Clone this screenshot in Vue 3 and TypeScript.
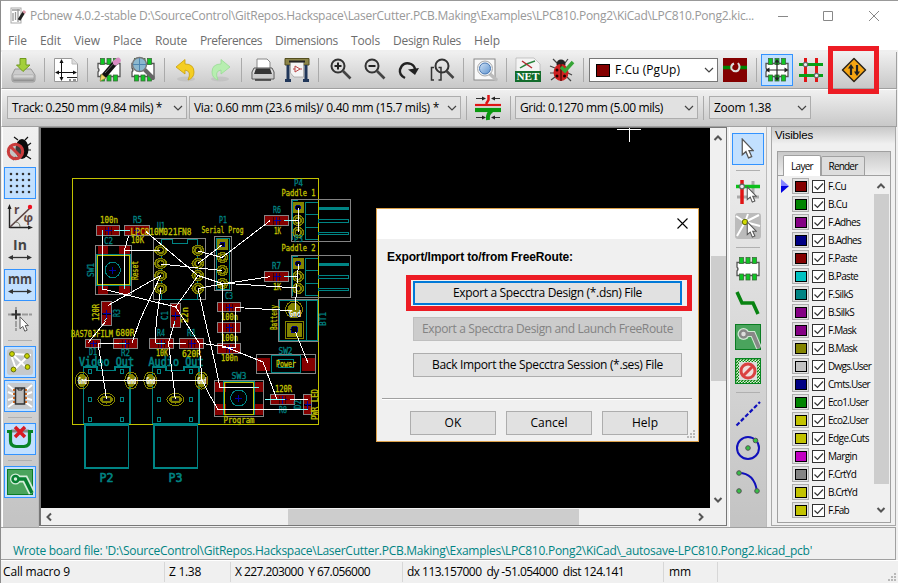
<script setup lang="ts">
import type { Directive } from 'vue'

interface Fitted { t: string; w: number }
interface Layer extends Fitted { c: string }
interface PcbText { t: string; x: number; y: number; w: number; h?: number; v?: boolean; k: string }

/* Spreads a label over its design width by adjusting the tracking. */
const vFit: Directive<HTMLElement, number> = {
  mounted(el, binding) {
    const n = (el.textContent ?? '').length
    const natural = el.getBoundingClientRect().width
    el.style.letterSpacing = `${(binding.value + 1 - natural) / n}px`
  },
}

const menus: Fitted[] = [
  { t: 'File', w: 18 }, { t: 'Edit', w: 20 }, { t: 'View', w: 25 }, { t: 'Place', w: 28 },
  { t: 'Route', w: 31 }, { t: 'Preferences', w: 61 }, { t: 'Dimensions', w: 62 },
  { t: 'Tools', w: 28 }, { t: 'Design Rules', w: 67 }, { t: 'Help', w: 25 },
]

const layers: Layer[] = [
  { t: 'F.Cu', w: 17, c: '#840000' }, { t: 'B.Cu', w: 18, c: '#008400' },
  { t: 'F.Adhes', w: 31, c: '#840084' }, { t: 'B.Adhes', w: 32, c: '#000084' },
  { t: 'F.Paste', w: 28, c: '#840000' }, { t: 'B.Paste', w: 29, c: '#00c2c2' },
  { t: 'F.SilkS', w: 24, c: '#008484' }, { t: 'B.SilkS', w: 25, c: '#840084' },
  { t: 'F.Mask', w: 27, c: '#840084' }, { t: 'B.Mask', w: 28, c: '#848400' },
  { t: 'Dwgs.User', w: 42, c: '#c2c2c2' }, { t: 'Cmts.User', w: 41, c: '#000084' },
  { t: 'Eco1.User', w: 39, c: '#008400' }, { t: 'Eco2.User', w: 39, c: '#c2c200' },
  { t: 'Edge.Cuts', w: 40, c: '#c2c200' }, { t: 'Margin', w: 28, c: '#c200c2' },
  { t: 'F.CrtYd', w: 27, c: '#848484' }, { t: 'B.CrtYd', w: 28, c: '#c2c200' },
  { t: 'F.Fab', w: 20, c: '#c2c200' },
]

const position = 'X 227.203000\u00a0 Y 67.056000'
const delta = 'dx 113.157000\u00a0 dy -51.054000\u00a0 dist 124.141'

/* Horizontal and vertical two-pad parts: x, y, width, height */
const chips: number[][] = [
  [96.5, 225.5, 23, 10], [124.5, 225.5, 25, 10], [264.5, 215.5, 24, 10], [264.5, 271.5, 24, 10],
  [217.5, 302.5, 23, 9], [217.5, 322.5, 23, 10], [217.5, 343.5, 23, 10], [85.5, 339.5, 15, 8],
  [113.5, 338.5, 24, 10], [149.5, 338.5, 24, 10], [179.5, 338.5, 24, 10], [270.5, 394.5, 24, 10],
]
const tallChips: number[][] = [[101.5, 301.5, 10, 24], [170.5, 303.5, 10, 24], [303.5, 394.5, 8, 20]]
const icPads: number[][] = [
  [160.7, 250.3], [160.7, 263.5], [160.7, 275.5], [160.7, 288.5],
  [198, 250.3], [198, 263.5], [198, 275.5], [198, 288.5],
]
const roundPads: number[][] = [
  [222.5, 257.5], [222.5, 270.5], [222.5, 283.5],
  [298.3, 220.5], [298.3, 232.5], [298.3, 276.5], [298.3, 288.5],
]
const sidePads: number[] = [82, 131.3, 150.3, 201.5]

const ratsnest: string[] = [
  '102.5,230 102.5,289 175.7,307', '128.5,236 124.5,250 124.5,289', '124.5,250.5 160,250.5',
  '160.7,275.5 108.3,305.3', '146,231.7 198,275.7', '160.7,264 222,270.5', '160.7,275.5 140,320 132,343',
  '160.7,288.5 156.5,320 155,343', '198,288 205,320 215,363 220,387.5 259,387.5',
  '198,275.7 175.7,307 199,343', '106,321 88,343', '175,321 168.5,343 175.3,399', '98,343 106.5,399',
  '98,343.5 119,343.5', '169,343.5 186,343.5', '199,343 209,344.5 223,346 263,362 277,399.5',
  '82,380.5 202,380.5', '199,343 202,380 209,394 218,409.5 308,409.5', '222.5,283 222.5,348',
  '235.5,348 235.5,307.5 291.7,310.7', '270,220.7 222,257.5', '270,276.7 222,284 198,288.5',
  '220,283 297,288', '198,251 222,257.5', '198,263.5 222.5,244.5', '198,275.5 222,283.5',
  '298.5,208 298.5,232', '298.5,264 295,310', '295.5,332 308,363', '290,399.5 308,399.5', '284,220.5 298,220.5',
  '284,276.5 298,276.5', '222,347 235,348', '114,230.5 130,230.5',
]

const pcbTexts: PcbText[] = [
  { t: '100n', x: 100, y: 223, w: 18, k: 'y' }, { t: 'R5', x: 133, y: 223, w: 9, k: 't' },
  { t: 'U1', x: 157, y: 229, w: 8, k: 't' }, { t: 'LPC810M021FN8', x: 130.5, y: 235, w: 61, k: 'y' },
  { t: 'C2', x: 104, y: 244, w: 9, k: 't' }, { t: '10K', x: 131, y: 243, w: 13, k: 'y' },
  { t: 'SW1', x: 94, y: 277, w: 14, v: true, k: 't' }, { t: 'Reset', x: 138, y: 280, w: 19, v: true, k: 'y' },
  { t: '120R', x: 99, y: 321, w: 17, v: true, k: 'y' }, { t: 'R3', x: 120, y: 317, w: 8, v: true, k: 't' },
  { t: 'C1', x: 168, y: 320, w: 9, v: true, k: 't' }, { t: '22n', x: 188, y: 323, w: 16, v: true, k: 'y' },
  { t: 'P4', x: 294, y: 186, w: 9, k: 't' }, { t: 'Paddle 1', x: 281.5, y: 196, w: 34, k: 'y' },
  { t: 'R6', x: 273, y: 213, w: 8, k: 't' }, { t: '1K', x: 274, y: 234, w: 7, k: 'y' },
  { t: 'P3', x: 294, y: 242, w: 9, k: 't' }, { t: 'Paddle 2', x: 281.5, y: 251, w: 34, k: 'y' },
  { t: 'R7', x: 272, y: 269, w: 9, k: 't' }, { t: '1K', x: 273, y: 290, w: 8, k: 'y' },
  { t: 'P1', x: 219, y: 223, w: 8, k: 't' }, { t: 'Serial Prog', x: 201.5, y: 233, w: 42, k: 'y' },
  { t: 'C3', x: 225, y: 299, w: 8, k: 't' }, { t: '100n', x: 221, y: 320, w: 17, k: 'y' },
  { t: '100n', x: 221, y: 341, w: 17, k: 'y' }, { t: '100n', x: 221, y: 361, w: 17, k: 'y' },
  { t: 'Battery', x: 277, y: 330, w: 25, v: true, k: 'y' }, { t: 'BT1', x: 326, y: 326, w: 14, v: true, k: 't' },
  { t: 'SW2', x: 278.5, y: 354, w: 14, k: 't' }, { t: 'Power', x: 276, y: 367, w: 20, k: 'y' },
  { t: 'SW3', x: 231.5, y: 379, w: 15, k: 't' }, { t: 'Program', x: 223.5, y: 423, w: 31, k: 'y' },
  { t: '120R', x: 275, y: 392, w: 17, k: 'y' }, { t: 'R8', x: 279, y: 413, w: 8, k: 't' },
  { t: 'D2', x: 301, y: 409, w: 9, v: true, k: 't' }, { t: 'PWR LED', x: 318, y: 420, w: 31, v: true, k: 'y' },
  { t: 'BAS70JFILM', x: 71, y: 337, w: 42, k: 'y' }, { t: '680R', x: 115.5, y: 336, w: 19, k: 'y' },
  { t: 'D1', x: 89, y: 355, w: 8, k: 't' }, { t: 'R2', x: 121, y: 356, w: 9, k: 't' },
  { t: 'R4', x: 157, y: 336, w: 8, k: 't' }, { t: 'R1', x: 187, y: 336, w: 9, k: 't' },
  { t: '10K', x: 156, y: 356, w: 12, k: 'y' }, { t: '620R', x: 182, y: 357, w: 19, k: 'y' },
  { t: 'Video Out', x: 79, y: 366, w: 55, h: 12, k: 'big' }, { t: 'Audio Out', x: 148.5, y: 366, w: 55, h: 12, k: 'big' },
  { t: 'P2', x: 99.5, y: 482, w: 14, h: 12.5, k: 'big' }, { t: 'P3', x: 168.5, y: 482, w: 14, h: 12.5, k: 'big' },
  { t: 'Gnd', x: 289, y: 317, w: 12, h: 8, k: 'w' },
]
</script>

<template>
  <div class="window">
    <svg class="defs" width="0" height="0">
      <defs>
        <linearGradient id="steel" x1="0" y1="0" x2="0" y2="1"><stop offset="0" stop-color="#eee" /><stop offset="1" stop-color="#888" /></linearGradient>
        <linearGradient id="lens" x1="0" y1="0" x2="1" y2="1"><stop offset="0" stop-color="#cfe2f5" /><stop offset="1" stop-color="#5f93cf" /></linearGradient>
        <pattern id="hatch" width="3" height="3" patternUnits="userSpaceOnUse"><rect width="3" height="3" fill="#d8f0d8" /><path d="M0 3L3 0" stroke="#0a840f" stroke-width="1.3" /></pattern>
        <symbol id="cursor" viewBox="0 0 12 20"><path d="M1 1V16L4.500 13L7 19L10 17.700L7.400 12H11.500Z" fill="#fff" stroke="#555" stroke-width="1.2" /></symbol>
        <symbol id="chip" viewBox="0 0 26 26">
          <path d="M2 6.500H24V19.500H2V15Q4 13 2 11Z" fill="#fff" stroke="#555" stroke-width="1.3" />
          <g fill="#0fc624" stroke="#3c6b3c" stroke-width=".8"><rect x="4.500" y="1.500" width="4" height="6" /><rect x="11" y="1.500" width="4" height="6" /><rect x="17.500" y="1.500" width="4" height="6" /><rect x="4.500" y="18" width="4" height="6" /><rect x="11" y="18" width="4" height="6" /><rect x="17.500" y="18" width="4" height="6" /></g>
        </symbol>
        <symbol id="chev" viewBox="0 0 10 10"><path d="M1 3L5 7L9 3" fill="none" stroke="#444" stroke-width="1.2" /></symbol>
        <symbol id="sb" viewBox="0 0 10 10"><path d="M1.500 7L5 3.500L8.500 7" fill="none" stroke="#555" stroke-width="2" /></symbol>
      </defs>
    </svg>

    <header class="titlebar">
      <svg class="appicon" width="16" height="18" viewBox="0 0 16 18"><rect x="1" y="1" width="10" height="15" fill="#fff" stroke="#aaa" /><path d="M2 3H10M3 6V14M5.500 5V13M8 2V15" stroke="#999" stroke-width="1.3" /><path d="M14 5L9 13" stroke="#222" stroke-width="3" /><path d="M15 4L13.500 6" stroke="#d9a" stroke-width="3" /></svg>
      <span v-fit="723" class="title">Pcbnew 4.0.2-stable D:\SourceControl\GitRepos.Hackspace\LaserCutter.PCB.Making\Examples\LPC810.Pong2\KiCad\LPC810.Pong2.kic...</span>
      <svg class="winbtns" width="110" height="12" viewBox="0 0 110 12"><path d="M5 6.500H15M50.500 1.500H59.500V10.500H50.500ZM96 1L106 11M106 1L96 11" fill="none" stroke="#888" /></svg>
    </header>

    <nav class="menubar">
      <span v-for="m in menus" :key="m.t" class="menu"><span v-fit="m.w" class="fit">{{ m.t }}</span></span>
    </nav>

    <div class="toolbar main">
      <div class="slot"><svg width="26" height="26" viewBox="0 0 26 26"><path d="M5 12L2 18V23Q2 25 4 25H23Q25 25 25 23V18L21 12Z" fill="#ccc" stroke="#999" /><rect x="3" y="18" width="21" height="6" rx="1" fill="url(#steel)" stroke="#999" stroke-width=".6" /><path d="M10 1.500H16V8H20L13 14.500L6.500 8H10Z" fill="#a3cf3a" stroke="#719b1e" /></svg></div>
      <i class="sep"></i>
      <div class="slot"><svg width="26" height="26" viewBox="0 0 26 26"><path d="M1.500 1.500H19L24.500 7V24.500H1.500Z" fill="#fff" stroke="#999" /><path d="M19 1.500V7H24.500" fill="#ddd" stroke="#bbb" /><path d="M8.500 3V23M3 15.500H23" stroke="#111" /><path d="M8.500 2L6.500 6H10.500ZM8.500 24L6.500 20H10.500ZM2 15.500L6 13.500V17.500ZM24 15.500L20 13.500V17.500Z" fill="#111" /><path d="M14 20.500H24M16 23H18M20 23H23" stroke="#222" /></svg></div>
      <i class="sep"></i>
      <div class="slot"><svg width="26" height="26" viewBox="0 0 26 26"><use href="#chip" /><path d="M7 20L19 6" stroke="#111" stroke-width="5.500" /><path d="M9 16L18 6" stroke="#666" stroke-width="1" /><path d="M19.500 5.500L22 3.500" stroke="#d98cc4" stroke-width="5.500" stroke-linecap="round" /><path d="M4 24L5.500 17L10 21Z" fill="#f1d66b" stroke="#a68b3b" stroke-width=".6" /></svg></div>
      <div class="slot"><svg width="26" height="26" viewBox="0 0 26 26"><use href="#chip" /><path d="M15 13L23 21" stroke="#666" stroke-width="4" stroke-linecap="round" /><circle cx="9.500" cy="7.500" r="7" fill="#8bb8cf" stroke="#777" stroke-width="1.400" /><path d="M9.500 1V14M3 7.500H16" stroke="#4e86b0" /></svg></div>
      <i class="sep"></i>
      <div class="slot"><svg width="26" height="26" viewBox="0 0 26 26"><ellipse cx="13" cy="22" rx="9" ry="2.500" fill="#0001" /><path d="M3 10L12 2.500V7Q21 7 21 15Q21 21 15 23Q19 14 12 13V17Z" fill="#f5ce22" stroke="#c9a007" stroke-width=".8" /></svg></div>
      <div class="slot"><svg width="26" height="26" viewBox="0 0 26 26"><ellipse cx="13" cy="22" rx="9" ry="2.500" fill="#0001" /><path d="M23 10L14 2.500V7Q5 7 5 15Q5 21 11 23Q7 14 14 13V17Z" fill="#b7eeb0" stroke="#98dc94" stroke-width=".8" /></svg></div>
      <i class="sep"></i>
      <div class="slot"><svg width="26" height="26" viewBox="0 0 26 26"><path d="M7 13V2H17L20 5V13Z" fill="#fff" stroke="#888" /><path d="M4 11H22L24 15V22H2V15Z" fill="#ddd" stroke="#555" /><path d="M6 11.500H20L22 17H4Z" fill="#343434" /><rect x="3" y="17" width="20" height="4" fill="#ccc" /><path d="M5 23H21" stroke="#333" stroke-width="1.500" /></svg></div>
      <div class="slot"><svg width="26" height="26" viewBox="0 0 26 26"><path d="M1 1.500H25V8H1Z" fill="#8b8449" stroke="#544f20" /><path d="M4 8V22M22 8V22M1 23.500H7M19 23.500H25" stroke="#21375a" stroke-width="3" /><path d="M6.500 5H19.500V20H10L6.500 16Z" fill="#f4f4f4" stroke="#999" stroke-width=".7" /><path d="M9 12H11M11 9V15L16 12ZM16 12H18" stroke="#b44" fill="none" /><path d="M5 4.500H21" stroke="#222" stroke-width="2" /></svg></div>
      <i class="sep"></i>
      <div class="slot"><svg width="26" height="26" viewBox="-1 0 26 26"><circle cx="10" cy="9" r="6.500" class="mg" /><path d="M15 14L22.500 21.500" class="mh" /><path d="M6.500 9H13.500M10 5.500V12.500" class="mp" /></svg></div>
      <div class="slot"><svg width="26" height="26" viewBox="-1 0 26 26"><circle cx="10" cy="9" r="6.500" class="mg" /><path d="M15 14L22.500 21.500" class="mh" /><path d="M6.500 9H13.500" class="mp" /></svg></div>
      <div class="slot"><svg width="26" height="26" viewBox="-1 -1 26 26"><path d="M9 20Q3 17 4 11.500Q7 3 15 6Q19 8 19 12" fill="none" stroke="#222" stroke-width="2.400" /><path d="M12 11.500L23 10L19 17Z" fill="#222" /></svg></div>
      <div class="slot"><svg width="26" height="26" viewBox="1 0 26 26"><circle cx="14" cy="9" r="6.500" fill="none" stroke="#333" stroke-width="2" /><path d="M18.500 14L25.500 21" stroke="#444" stroke-width="2.500" /><path d="M6 10.500H3.500V23H6M10.500 10.500H13V23H10.500" fill="none" stroke="#333" stroke-width="1.500" /></svg></div>
      <i class="sep"></i>
      <div class="slot"><svg width="26" height="26" viewBox="0 0 26 26"><rect x="2" y="2" width="21" height="21" fill="#f8f8f8" stroke="#888" /><path d="M18 17L24 22.500" stroke="#bbb" stroke-width="3.500" stroke-linecap="round" /><circle cx="13" cy="11.500" r="7.500" fill="#e9eef3" stroke="#aaa" /><circle cx="13" cy="11.500" r="5.500" fill="url(#lens)" stroke="#4978b4" /></svg></div>
      <i class="sep"></i>
      <div class="slot"><svg width="26" height="26" viewBox="0 0 26 26"><path d="M1 1H19L25 7V24H1Z" fill="#f4f4f4" stroke="#aaa" stroke-width=".6" /><path d="M5 11Q12 6 20 4" stroke="#27833b" fill="none" stroke-width="1.500" /><path d="M7 4L17 11" stroke="#b32b30" stroke-width="1.500" /><rect y="14" width="26" height="11" fill="#136c2c" /><text x="1.500" y="23" textLength="23" lengthAdjust="spacingAndGlyphs" class="net">NET</text></svg></div>
      <div class="slot"><svg width="26" height="26" viewBox="0 0 26 26"><path d="M8 6L4 2M16 6L19 2M6 11L1 9M5 16L1 16M6 20L2 23M19 16L23 18M18 20L22 24" stroke="#444" stroke-width="1.200" /><circle cx="12" cy="7" r="4.500" fill="#222" /><ellipse cx="12" cy="15.500" rx="7.500" ry="8.500" fill="#cf1f1f" /><path d="M12 7V24" stroke="#300" /><g fill="#200"><circle cx="8" cy="13" r="1.500" /><circle cx="8" cy="19" r="1.500" /><circle cx="15.500" cy="19" r="1.500" /></g><path d="M12 10L16 14L24 5" fill="none" stroke="#36a536" stroke-width="3.500" /></svg></div>
      <i class="sep"></i>
      <div class="combo layerbox"><i class="chipcolor"></i><span v-fit="64" class="fit">F.Cu (PgUp)</span><svg class="chev" width="10" height="10"><use href="#chev" /></svg></div>
      <div class="slot"><svg width="24" height="24" viewBox="0 0 24 24"><rect width="24" height="24" fill="#840000" /><path d="M0 9.500H8M16 9.500H24" stroke="#008400" stroke-width="3.500" /><path d="M11 5.500Q7.500 7 8.500 11Q11 14.500 15 12.500Q18 9 15 5" fill="none" stroke="#ddd" stroke-width="2" /></svg></div>
      <i class="sep"></i>
      <div class="slot"><div class="on"><svg width="26" height="26" viewBox="0 0 26 26"><use href="#chip" /><path d="M13 3V23M3 13H23" stroke="#222" stroke-width="1.200" /><path d="M13 2L10.500 5.500H15.500ZM13 24L10.500 20.500H15.500ZM1.500 13L5.500 10.500V15.500ZM24.500 13L20.500 10.500V15.500Z" fill="#222" /></svg></div></div>
      <div class="slot"><svg width="26" height="26" viewBox="0 0 26 26"><path d="M7.500 1V25M18.500 1V25" stroke="#e01515" stroke-width="3" /><path d="M1 7.500H25M1 18.500H25" stroke="#08a018" stroke-width="3" /><circle cx="7.500" cy="7.500" r="2.200" class="via" /><circle cx="18.500" cy="18.500" r="2.200" class="via" /></svg></div>
      <div class="slot marked"><svg width="26" height="26" viewBox="0 0 26 26"><path d="M13 1.500L24.500 13L13 24.500L1.500 13Z" fill="#f6a512" stroke="#2c2418" stroke-width="1.500" stroke-linejoin="round" /><path d="M10 9V18M16 8V17" stroke="#222" stroke-width="2.200" /><path d="M10 7L7 11.500H13ZM16 19L13 14.500H19Z" fill="#222" /></svg></div>
    </div>

    <div class="toolbar aux">
      <div class="combo track"><span v-fit="149" class="fit">Track: 0.250 mm (9.84 mils) *</span><svg class="chev" width="10" height="10"><use href="#chev" /></svg></div>
      <div class="combo viabox"><span v-fit="244" class="fit">Via: 0.60 mm (23.6 mils)/ 0.40 mm (15.7 mils) *</span><svg class="chev" width="10" height="10"><use href="#chev" /></svg></div>
      <i class="sep"></i>
      <div class="slot"><svg width="26" height="26" viewBox="0 0 26 26"><path d="M0 10H26" stroke="#e01515" stroke-width="2.200" /><path d="M13.500 0V5L11 9" fill="none" stroke="#e01515" stroke-width="2.500" /><path d="M0 15H26" stroke="#0a980f" stroke-width="4.200" /><path d="M17 16Q12 18 13 25" fill="none" stroke="#0a980f" stroke-width="4" /><path d="M1 3.500H8M18 3.500H25M1 22.500H8M18 22.500H25" stroke="#333" /><path d="M11 3.500L7 1.500V5.500ZM16 3.500L20 1.500V5.500ZM11 22.500L7 20.500V24.500ZM16 22.500L20 20.500V24.500Z" fill="#222" /></svg></div>
      <i class="sep"></i>
      <div class="combo gridbox"><span v-fit="142" class="fit">Grid: 0.1270 mm (5.00 mils)</span><svg class="chev" width="10" height="10"><use href="#chev" /></svg></div>
      <i class="sep"></i>
      <div class="combo zoombox"><span v-fit="56" class="fit">Zoom 1.38</span><svg class="chev" width="10" height="10"><use href="#chev" /></svg></div>
    </div>

    <div class="middle">
      <aside class="side left">
        <div class="slot"><svg width="26" height="26" viewBox="1 0 26 26"><path d="M12 4L8 1M19 4L22 1M21 10L25 7M21 14H25M19 19L25 23M10 21L7 24" stroke="#111" stroke-width="1.200" /><ellipse cx="16" cy="13" rx="6.500" ry="10" fill="#0b0b0b" /><circle cx="9.500" cy="15.500" r="7.200" fill="#8886" stroke="#c93b3b" stroke-width="3" /><path d="M4.500 10.500L14.500 20.500" stroke="#c93b3b" stroke-width="3" /></svg></div>
        <div class="slot"><div class="on"><svg width="26" height="26" viewBox="0 0 26 26"><path d="M4 4H23M4 10H23M4 16H23M4 22H23" stroke="#333" stroke-width="2.600" stroke-dasharray="0 6" stroke-linecap="round" /></svg></div></div>
        <div class="slot"><svg width="26" height="26" viewBox="0 0 26 26"><path d="M2.500 24V3M2.500 23.500H23" stroke="#222" stroke-width="1.400" /><path d="M2.500 0L.5 5H4.500ZM26 23.500L21 21.500V25.500Z" fill="#222" /><path d="M3 23L23 4" stroke="#5b4444" stroke-width="1.700" /><path d="M8 18Q13 18 13 23" fill="none" stroke="#776" /><circle cx="23" cy="3" r="2.200" fill="#f01020" /><text x="7" y="9.500" class="polar">r</text><text x="16.500" y="18" class="polar">φ</text></svg></div>
        <div class="slot"><svg width="26" height="26" viewBox="0 0 26 26"><text x="6" y="12" textLength="14" class="unit">In</text><path d="M3 19.500H23" stroke="#333" stroke-width="1.300" /><path d="M1 19.500L6 17V22ZM25 19.500L20 17V22Z" fill="#333" /></svg></div>
        <div class="slot"><div class="on"><svg width="26" height="26" viewBox="0 0 26 26"><text x="1" y="12" textLength="24" lengthAdjust="spacingAndGlyphs" class="unit">mm</text><path d="M3 19.500H23" stroke="#333" stroke-width="1.300" /><path d="M1 19.500L6 17V22ZM25 19.500L20 17V22Z" fill="#333" /></svg></div></div>
        <div class="slot"><svg width="26" height="26" viewBox="0 0 26 26"><path d="M9 1V25M1 8.500H25" stroke="#999" stroke-width="1.800" stroke-dasharray="6 1" /><path d="M9 4V13M4.500 8.500H13.500" stroke="#333" stroke-width="2" /><use href="#cursor" x="12" y="10" width="10" height="16" /></svg></div>
        <i class="sep"></i>
        <div class="slot"><div class="on"><svg width="26" height="26" viewBox="0 0 26 26"><rect width="26" height="26" rx="3" fill="#c6c9cc" /><path d="M5 5L21 20M7 21L20 8M7 5L24 6M4 6L9 20" stroke="#fff" stroke-width="2" /><g fill="#cbd600" stroke="#68700c"><circle cx="5" cy="5" r="2.400" /><circle cx="20" cy="7" r="2.400" /><circle cx="6.500" cy="20.500" r="2.400" /><circle cx="20.500" cy="18" r="2.400" /></g></svg></div></div>
        <div class="slot"><div class="on"><svg width="26" height="26" viewBox="0 0 26 26"><rect width="26" height="26" rx="3" fill="#c6c9cc" /><path d="M1 2L8 8M1 9L8 12M1 17L8 15M1 24L8 19M25 2L18 8M25 9L18 12M25 17L18 15M25 24L18 19" stroke="#fff" stroke-width="2" /><path d="M6 7H8M6 11H8M6 15H8M6 19H8M18 7H20M18 11H20M18 15H20M18 19H20" stroke="#d36b22" stroke-width="2" /><path d="M8.500 5H17.500V21H8.500Z" fill="#bbb" stroke="#333" stroke-width="1.500" /><path d="M11 5V7H15V5" fill="none" stroke="#222" /></svg></div></div>
        <i class="sep"></i>
        <div class="slot"><div class="on"><svg width="26" height="26" viewBox="0 0 26 26"><path d="M4 5H22" stroke="#888" stroke-width="3" /><path d="M0 5.500H3.500V15Q3.500 20 9 20.500H17Q22.500 20 22.500 15V5.500H26" fill="none" stroke="#078324" stroke-width="3.200" /><path d="M8 1L18 11M18 1L8 11" stroke="#d81b22" stroke-width="3.500" /></svg></div></div>
        <i class="sep"></i>
        <div class="slot"><div class="on"><svg width="26" height="26" viewBox="0 0 26 26"><rect x=".5" y=".5" width="25" height="25" fill="#4aa45d" stroke="#0a7c22" /><path d="M8.500 10H18L25 24" fill="none" stroke="#d4edda" stroke-width="7" /><circle cx="8.500" cy="10" r="5.500" fill="#d4edda" /><path d="M9 10H18L25 24" fill="none" stroke="#078032" stroke-width="3.500" /><circle cx="8.500" cy="10" r="3" fill="#d4edda" stroke="#078032" stroke-width="2.500" /></svg></div></div>
      </aside>

      <main class="frame">
        <div class="canvasrow">
          <svg class="pcb" width="669" height="380" viewBox="41 128 669 380" shape-rendering="crispEdges">
            <path d="M617 129.500H641M629.500 128V142" stroke="#fff" fill="none" />
            <rect x="72.500" y="178.500" width="246" height="246" class="ol y" />

            <!-- Phono sockets -->
            <g v-for="dx in [0, 69]" :key="dx" :transform="`translate(${dx} 0)`">
              <path d="M83.500 367H97V370.500H115V367H130V423.500H83.500Z" class="ol t thick" />
              <rect x="85" y="425" width="43.500" height="43" class="ol t thick" />
              <g v-for="sy in [369, 397.500, 417]" :key="sy"><rect x="88.500" :y="sy" width="3" height="4" class="ol t" /><rect x="120.500" :y="sy" width="3" height="4" class="ol t" /></g>
              <ellipse cx="106.500" cy="399.500" rx="8.500" ry="6" class="ol o" />
              <ellipse cx="106.500" cy="399.500" rx="6.500" ry="4" fill="#848400" />
              <ellipse cx="106.500" cy="399.500" rx="3.500" ry="2" fill="#111" />
            </g>
            <g v-for="px in sidePads" :key="px">
              <ellipse :cx="px" cy="380.500" rx="6.500" ry="8.500" class="ol o" />
              <ellipse :cx="px" cy="380.500" rx="4.500" ry="7" fill="#848400" />
              <text :x="px - 4" y="384" textLength="9" lengthAdjust="spacingAndGlyphs" font-size="8" class="pt w">Gnd</text>
            </g>

            <!-- Tactile switch SW1 -->
            <path d="M98 245H108V256H98ZM119 245H130V256H119ZM98 284H108V295H98ZM119 284H130V295H119Z" class="cu" />
            <rect x="95.500" y="245.500" width="36" height="49" class="ol g" /><rect x="96.500" y="254.500" width="34" height="31" class="ol t" /><rect x="97.500" y="255.500" width="32" height="29" class="ol y" />
            <circle cx="112.700" cy="270" r="7.700" class="ol t" /><path d="M109 270.500H116M112.500 267V274" class="ol b" />

            <!-- Tactile switch SW3 -->
            <path d="M215 382H226V392H215ZM253 382H264V392H253ZM215 404H226V415H215ZM253 404H264V415H253Z" class="cu" />
            <rect x="214.500" y="380.500" width="49" height="36" class="ol g" /><rect x="223.500" y="381.500" width="31" height="33" class="ol t" /><rect x="224.500" y="382.500" width="29" height="32" class="ol y" />
            <circle cx="238.700" cy="398" r="8" class="ol t" /><path d="M235 398.500H242M238.500 395V402" class="ol b" />

            <!-- Microcontroller -->
            <rect x="153.500" y="238.500" width="52" height="61" class="ol g" /><path d="M161.500 239.500H172V243H187V239.500H197.500V299.500H161.500Z" class="ol t" />
            <g v-for="(p, i) in icPads" :key="`u${i}`"><ellipse :cx="p[0]" :cy="p[1]" rx="6.500" ry="5.500" fill="#848400" /><circle :cx="p[0]" :cy="p[1]" r="4.200" fill="none" stroke="#333300" /><circle :cx="p[0]" :cy="p[1]" r="2.200" fill="#000" /></g>

            <!-- Serial header -->
            <rect x="214.500" y="236.500" width="17" height="54" class="ol g" /><rect x="216.500" y="238.500" width="13" height="51" class="ol t" /><rect x="217" y="239" width="11" height="11" fill="#848400" /><circle cx="222.500" cy="244.500" r="2.500" fill="#000" stroke="#000084" />

            <!-- Paddle connectors -->
            <g v-for="dy in [0, 56]" :key="dy" :transform="`translate(0 ${dy})`">
              <rect x="291.500" y="199.500" width="59" height="42" class="ol g" />
              <path d="M292.500 200.500H298M292.500 200V240M305.500 202.500H318M305.500 214.500H318M305.500 227.500H318M305.500 239.500H318M305.500 202V240" class="ol t" />
              <rect x="319" y="207" width="30" height="3" fill="#008484" /><rect x="318.500" y="219.500" width="30" height="3" class="ol t" /><rect x="318.500" y="232.500" width="30" height="2" class="ol t" />
              <rect x="293" y="202" width="11" height="11" fill="#848400" /><circle cx="298" cy="207.500" r="2.500" fill="#000" stroke="#000084" />
            </g>

            <!-- Battery terminals -->
            <path d="M318.500 299.500H278.500V341.500H318.500" class="ol g" /><path d="M317.500 300.500H279.500V340.500H317.500ZM306.500 300V340" class="ol t" />
            <circle cx="294" cy="309.500" r="8.500" class="ol o" /><circle cx="294" cy="309.500" r="6.500" fill="#848400" />
            <rect x="285.500" y="321.500" width="18" height="17" class="ol o" /><rect x="287" y="323" width="15" height="14" fill="#848400" /><circle cx="294.500" cy="329.500" r="3.500" fill="#000" stroke="#000084" />

            <!-- Power switch -->
            <path d="M257 358H270V371H257ZM302 358H315V371H302Z" class="cu" /><rect x="256.500" y="354.500" width="59" height="19" class="ol g" /><rect x="271.500" y="355.500" width="29" height="17" class="ol t" /><rect x="278.500" y="359.500" width="15" height="8" class="ol t" />

            <g v-for="(c, i) in chips" :key="`c${i}`">
              <rect :x="c[0] + .5" :y="c[1] + .5" :width="c[2] - 1" :height="c[3] - 1" class="cu" />
              <path :d="`M${c[0] + c[2] / 2 - 3} ${c[1] + 1}v${c[3] - 2}m6 0v${2 - c[3]}`" stroke="#3c0000" />
              <path :d="`M${c[0] + c[2] / 2} ${c[1] + 1}v${c[3] - 2}m-3 ${1 - c[3] / 2}h7`" class="ol b" />
              <rect :x="c[0]" :y="c[1]" :width="c[2]" :height="c[3]" class="ol g" />
            </g>
            <g v-for="(c, i) in tallChips" :key="`t${i}`">
              <rect :x="c[0] + .5" :y="c[1] + .5" :width="c[2] - 1" :height="c[3] * .45" class="cu" /><rect :x="c[0] + .5" :y="c[1] + c[3] * .55" :width="c[2] - 1" :height="c[3] * .45" class="cu" />
              <path :d="`M${c[0] + 1} ${c[1] + c[3] / 2}h${c[2] - 2}m${1 - c[2] / 2} -4v8`" class="ol b" />
              <rect :x="c[0]" :y="c[1]" :width="c[2]" :height="c[3]" class="ol g" />
            </g>

            <g v-for="(p, i) in roundPads" :key="`p${i}`"><circle :cx="p[0]" :cy="p[1]" r="5.800" fill="#848400" /><circle :cx="p[0]" :cy="p[1]" r="4" fill="none" stroke="#333300" /><circle :cx="p[0]" :cy="p[1]" r="2.200" fill="#000" /></g>

            <text v-for="(s, i) in pcbTexts" :key="`s${i}`" :transform="`translate(${s.x} ${s.y})${s.v ? ' rotate(-90)' : ''}`" :textLength="s.w" lengthAdjust="spacingAndGlyphs" :font-size="s.h ?? 8.5" :class="['pt', s.k]">{{ s.t }}</text>

            <polyline v-for="(r, i) in ratsnest" :key="`r${i}`" :points="r" fill="none" stroke="#fff" />
            <path d="M114 230.500H130M284 220.500H291M284 276.500H291M265 399.500H285M156 343.500H165M119 343.500H126M175 321L174 325M104 321L107 318M102.500 230V236M102.500 285V289M124.500 285V289M259 387.500H253M300 409.500H308" stroke="#84ffff" fill="none" />
          </svg>
          <div class="vscroll"><svg width="10" height="10"><use href="#sb" /></svg><i class="vthumb"></i><svg class="down" width="10" height="10"><use href="#sb" /></svg></div>
        </div>
        <div class="hscroll"><svg class="lft" width="10" height="10"><use href="#sb" /></svg><i class="hthumb"></i><svg class="rgt" width="10" height="10"><use href="#sb" /></svg></div>
      </main>

      <aside class="side right">
        <div class="slot"><div class="on"><svg width="26" height="26"><use href="#cursor" x="6" y="2" width="13" height="21" /></svg></div></div>
        <i class="sep"></i>
        <div class="slot"><svg width="26" height="26" viewBox="0 0 26 26"><path d="M18 2V23M2 18H24" stroke="#aaa" stroke-width="3" /><path d="M7 1V25" stroke="#e01515" stroke-width="3.500" /><path d="M1 7.500H25" stroke="#0cc01c" stroke-width="3.500" /><circle cx="7" cy="7.500" r="2.400" class="via" /><use href="#cursor" x="11" y="7" width="11" height="17" /></svg></div>
        <div class="slot"><svg width="26" height="26" viewBox="0 0 26 26"><rect width="26" height="26" rx="3" fill="#bbb" /><path d="M10 9L1 3M10 9L13 1M10 9L24 2M10 9L25 13M10 9L2 23" stroke="#fff" stroke-width="2" /><circle cx="10" cy="9" r="2.700" fill="#d2dc00" stroke="#667008" /><use href="#cursor" x="11" y="8" width="11" height="17" /></svg></div>
        <i class="sep"></i>
        <div class="slot"><svg width="26" height="26"><use href="#chip" width="26" height="26" /></svg></div>
        <div class="slot"><svg width="26" height="26" viewBox="0 0 26 26"><path d="M2 2L7 13H18L23 24" fill="none" stroke="#088311" stroke-width="3.500" /></svg></div>
        <div class="slot"><svg width="26" height="26" viewBox="0 0 26 26"><rect x=".5" y=".5" width="25" height="25" fill="#4aa45d" stroke="#0a7c22" /><path d="M9 10H18L24 24" fill="none" stroke="#cfe8d4" stroke-width="6" /><circle cx="8.500" cy="10" r="6" fill="#cfe8d4" /><path d="M9 10H18L24 24" fill="none" stroke="#888" stroke-width="4" /><circle cx="8.500" cy="10" r="3.500" fill="#ddd" stroke="#888" stroke-width="2.500" /></svg></div>
        <div class="slot"><svg width="26" height="26" viewBox="0 0 26 26"><rect x=".5" y=".5" width="25" height="25" fill="url(#hatch)" stroke="#078520" /><rect x="4" y="4" width="18" height="18" fill="#ddd" /><circle cx="13" cy="13" r="7" fill="#f1dddd" stroke="#da4242" stroke-width="3" /><path d="M8.500 17.500L17.500 8.500" stroke="#da4242" stroke-width="3" /></svg></div>
        <i class="sep"></i>
        <div class="slot"><svg width="26" height="26" viewBox="0 0 26 26"><path d="M1.500 24.500L25 1" stroke="#1010bb" stroke-width="2.200" stroke-dasharray="4.200 2" /></svg></div>
        <div class="slot"><svg width="26" height="26" viewBox="0 0 26 26"><circle cx="13" cy="13" r="11" fill="none" stroke="#1010bb" stroke-width="2" /><circle cx="13" cy="13" r="2.300" class="node" /><circle cx="20.500" cy="5.500" r="2.300" class="node" /></svg></div>
        <div class="slot"><svg width="26" height="26" viewBox="0 0 26 26"><path d="M4 4Q19 4 22 22" fill="none" stroke="#1010bb" stroke-width="2" /><circle cx="4" cy="4" r="2.300" class="node" /><circle cx="4" cy="22" r="2.300" class="node" /><circle cx="22" cy="22" r="2.300" class="node" /></svg></div>
      </aside>

      <aside class="visibles">
        <div class="vhead"><span v-fit="37" class="fit">Visibles</span></div>
        <div class="notebook">
          <div class="tabs"><div class="tab active"><span v-fit="21" class="fit">Layer</span></div><div class="tab"><span v-fit="28" class="fit">Render</span></div></div>
          <div class="listwrap">
            <div class="layers">
              <div v-for="(l, i) in layers" :key="l.t" class="layer">
                <svg class="mark" width="8" height="14" viewBox="0 0 8 14"><g v-if="i === 0"><path d="M0 0L8 7H0Z" fill="#8484ff" /><path d="M0 14L8 7H0Z" fill="#0000e0" /></g></svg>
                <span class="swatch"><i :style="{ background: l.c }"></i></span>
                <svg class="check" width="13" height="13" viewBox="0 0 13 13"><rect x=".5" y=".5" width="12" height="12" fill="#fff" stroke="#333" /><path d="M2.500 6.500L5.500 9.500L11 3.500" fill="none" stroke="#333" stroke-width="1.200" /></svg>
                <span v-fit="l.w" class="fit">{{ l.t }}</span>
              </div>
            </div>
            <div class="lscroll"><svg width="10" height="10"><use href="#sb" /></svg><i class="lthumb"></i><svg class="down" width="10" height="10"><use href="#sb" /></svg></div>
          </div>
        </div>
      </aside>
    </div>

    <div class="message"><span v-fit="798" class="fit">Wrote board file: 'D:\SourceControl\GitRepos.Hackspace\LaserCutter.PCB.Making\Examples\LPC810.Pong2\KiCad\_autosave-LPC810.Pong2.kicad_pcb'</span></div>

    <footer class="status">
      <div class="cell c1"><span v-fit="66" class="fit">Call macro 9</span></div>
      <div class="cell c2"><span v-fit="31" class="fit">Z 1.38</span></div>
      <div class="cell c3"><span v-fit="134" class="fit">{{ position }}</span></div>
      <div class="cell c4"><span v-fit="216" class="fit">{{ delta }}</span></div>
      <div class="cell c5"><span v-fit="21" class="fit">mm</span></div>
      <svg class="grip" width="9" height="9" viewBox="0 0 9 9"><path d="M6 0h2v2h-2zM3 3h2v2h-2zM6 3h2v2h-2zM0 6h2v2h-2zM3 6h2v2h-2zM6 6h2v2h-2z" fill="#b8b8b8" /></svg>
    </footer>

    <section class="dialog">
      <div class="dtitle"><svg width="11" height="11" viewBox="0 0 11 11"><path d="M.5.5L10.500 10.500M10.500.5L.5 10.500" stroke="#000" stroke-width="1.100" /></svg></div>
      <div class="dbody">
        <h1><span v-fit="185" class="fit">Export/Import to/from FreeRoute:</span></h1>
        <div class="actions">
          <button class="focus"><span v-fit="188" class="fit">Export a Specctra Design (*.dsn) File</span></button>
          <button disabled><span v-fit="250" class="fit">Export a Specctra Design and Launch FreeRoute</span></button>
          <button><span v-fit="230" class="fit">Back Import the Specctra Session (*.ses) File</span></button>
        </div>
        <div class="rule"></div>
        <div class="confirm">
          <button><span v-fit="16" class="fit">OK</span></button>
          <button><span v-fit="36" class="fit">Cancel</span></button>
          <button><span v-fit="25" class="fit">Help</span></button>
        </div>
      </div>
      <svg class="dgrip" width="9" height="9" viewBox="0 0 9 9"><path d="M6 0h2v2h-2zM3 3h2v2h-2zM6 3h2v2h-2zM0 6h2v2h-2zM3 6h2v2h-2zM6 6h2v2h-2z" fill="#b8b8b8" /></svg>
      <div class="highlight"></div>
    </section>
  </div>
</template>

<style>
body { margin: 0; overflow: hidden; }
</style>

<style scoped>
* { box-sizing: border-box; }
.window { position: relative; width: 898px; height: 583px; display: flex; flex-direction: column; background: #f0f0f0; border-left: 1px solid #8c8c8c; border-top: 1px solid #999; color: #000; font: 12px/16px "Open Sans", "Noto Sans", sans-serif; overflow: hidden; }
.defs { position: absolute; }
.fit, .title { display: inline-block; white-space: pre; flex: none; }
svg { display: block; flex: none; overflow: visible; }

.titlebar { height: 30px; flex: none; background: #fff; display: flex; align-items: center; padding-left: 9px; color: #999; }
.appicon { margin-right: 4px; }
.title { margin-top: -1px; }
.winbtns { margin-left: 19px; }
.menubar { height: 21px; flex: none; background: #fff; border-bottom: 2px solid #efefef; display: flex; align-items: center; gap: 13px; padding-left: 7px; color: #6d6d6d; }
.menu { display: flex; }

.toolbar { flex: none; display: flex; align-items: center; background: linear-gradient(#f0f0f0, #c8c8c8); border-right: 1px solid #a0a0a0; border-left: 1px solid #fff; margin-right: 1px; }
.toolbar.main { height: 37px; padding-left: 4px; border-bottom: 1px solid #a0a0a0; }
.toolbar.aux { height: 38px; border-top: 1px solid #fff; border-bottom: 1px solid #a0a0a0; padding: 0 0 1px 5px; }
.slot { width: 34px; height: 34px; flex: none; display: flex; align-items: center; justify-content: center; }
.on { width: 32px; height: 32px; display: flex; align-items: center; justify-content: center; background: #c2e0ff; border: 1px solid #3393ff; }
.toolbar .sep { width: 9px; height: 24px; flex: none; background: linear-gradient(#aaa, #aaa) center / 1px 100% no-repeat; }
.toolbar.main .sep:nth-last-of-type(1) { width: 8px; }
.combo { height: 23px; flex: none; display: flex; align-items: center; background: #e1e1e1; border: 1px solid #adadad; padding: 0 3px 0 4px; }
.combo .chev { margin-left: auto; }
.layerbox { width: 129px; height: 24px; background: #fff; border-color: #777; margin-left: 1px; padding-left: 6px; }
.chipcolor { width: 14px; height: 13px; background: #840000; border: 1px solid #000; margin-right: 5px; flex: none; }
.marked { width: 51px; height: 48px; border: 5px solid #ed1c24; position: relative; z-index: 1; }
.track { width: 180px; }
.viabox { width: 272px; margin-left: 2px; }
.toolbar.aux > .sep { margin-left: 1px; }
.gridbox { width: 183px; }
.zoombox { width: 102px; margin-left: 1px; }

.mg { fill: #ddd; stroke: #333; stroke-width: 2; }
.mh { stroke: #444; stroke-width: 2.6; }
.mp { stroke: #222; stroke-width: 2; }
.via { fill: #eee; stroke: #666; stroke-width: 1.2; }
.node { fill: #36bf46; stroke: #555; }
.net { font: bold 11px "Liberation Serif", serif; fill: #fff; }
.polar { font: bold 12px "Open Sans", sans-serif; fill: #5a4545; }
.unit { font: bold 14px "Open Sans", sans-serif; fill: #444; }

.middle { height: 400px; flex: none; display: flex; }
.side { flex: none; display: flex; flex-direction: column; align-items: center; padding-top: 5px; background: linear-gradient(#f0f0f0, #c3c3c3); border-left: 1px solid #fff; border-right: 1px solid #bbb; }
.side .sep { width: 24px; height: 9px; flex: none; background: linear-gradient(#b0b0b0, #b0b0b0) center / 100% 1px no-repeat; }
.left { width: 37px; margin-left: 1px; padding-right: 1px; }
.right { width: 38px; margin-left: 2px; padding-right: 1px; }
.frame { width: 688px; height: 399px; border: 1px solid #777; border-width: 1px 1px 1px 2px; background: #f0f0f0; flex: none; }
.canvasrow { display: flex; height: 380px; }
.pcb { background: #000; overflow: hidden; }
.vscroll { width: 16px; display: flex; flex-direction: column; align-items: center; padding: 5px 0 3px; }
.vthumb { width: 15px; height: 125px; margin-top: 113px; background: #cdcdcd; }
.down { margin-top: auto; transform: rotate(180deg); }
.hscroll { height: 17px; display: flex; align-items: center; padding-left: 3px; }
.hthumb { width: 291px; height: 16px; margin-left: 234px; background: #cdcdcd; }
.lft { transform: rotate(-90deg); }
.rgt { transform: rotate(90deg); margin-left: 117px; }

.ol { fill: none; stroke-width: 1; }
.thick { stroke-width: 1.6; }
.ol.y { stroke: #c2c200; }
.ol.t { stroke: #008484; }
.ol.g { stroke: #848484; }
.ol.o { stroke: #848400; }
.ol.b { stroke: #0000a4; }
.cu { fill: #840000; }
.pt { font-family: "DejaVu Sans Mono", monospace; stroke-width: .3px; }
.pt.y { fill: #c2c200; stroke: #c2c200; }
.pt.t { fill: #008484; stroke: #008484; }
.pt.big { fill: #008484; stroke: #008484; stroke-width: .6px; }
.pt.w { fill: #fff; font-weight: bold; }

.visibles { width: 125px; margin-left: 4px; border: 1px solid #a8a8a8; border-top: 0; background: #f0f0f0; flex: none; height: 399px; }
.vhead { height: 17px; background: linear-gradient(#c8c8c8, #f0f0f0); padding-left: 3px; font: 11.5px/17px "Liberation Sans", sans-serif; }
.notebook { width: 114px; height: 372px; margin: 7px 0 0 5px; border: 1px solid #a0a0a0; display: flex; flex-direction: column; font-size: 10px; }
.tabs { height: 24px; flex: none; display: flex; align-items: flex-end; padding-left: 5px; background: linear-gradient(#c9c9c9, #ededed); border-bottom: 1px solid #a0a0a0; }
.tab { height: 19px; width: 44px; border: 1px solid #a0a0a0; border-bottom: 0; border-radius: 2px 2px 0 0; display: flex; justify-content: center; align-items: center; background: #ddd; }
.tab.active { width: 38px; height: 21px; background: #fff; margin-bottom: -1px; }
.listwrap { flex: 1; display: flex; min-height: 0; }
.layers { flex: 1; padding: 1px 0 0 3px; }
.layer { height: 18px; display: flex; align-items: center; }
.mark { margin-right: 3px; }
.swatch { width: 17px; height: 16px; border: 1px solid #adadad; background: #e1e1e1; display: flex; align-items: center; justify-content: center; margin-right: 3px; }
.swatch i { width: 12px; height: 11px; border: 1px solid #000; }
.check { margin-right: 3px; }
.lscroll { width: 17px; flex: none; display: flex; flex-direction: column; align-items: center; padding: 5px 1px 7px 0; }
.lthumb { width: 15px; height: 290px; margin-top: 3px; background: #cdcdcd; }

.message { height: 33px; flex: none; margin: 0 2px 0 0; border: 1px solid #a0a0a0; border-left: 0; color: #008484; display: flex; align-items: flex-end; padding: 0 0 0 12px; }
.status { height: 23px; flex: none; display: flex; align-items: center; position: relative; border-top: 1px solid #fff; }
.cell { height: 20px; display: flex; align-items: center; border-right: 1px solid #d7d7d7; flex: none; padding-left: 4px; }
.c1 { width: 164px; padding-left: 2px; }
.c2 { width: 66px; }
.c3 { width: 172px; }
.c4 { width: 261px; }
.c5 { width: 54px; padding-left: 5px; }
.grip { position: absolute; right: 1px; bottom: 1px; }

.dialog { position: absolute; left: 375px; top: 207px; width: 323px; height: 234px; border: 1px solid #dda24b; background: #f0f0f0; }
.dtitle { height: 30px; background: #fff; display: flex; align-items: center; justify-content: flex-end; padding: 0 10px 2px 0; }
.dbody { padding: 10px 6px 0 5px; }
h1 { margin: 0 0 0 5px; font: bold 12px/16px "Liberation Sans", sans-serif; height: 32px; }
.actions { display: flex; flex-direction: column; gap: 12px; padding: 0 10px 0 31px; }
button { height: 24px; padding: 0; display: flex; align-items: center; justify-content: center; background: #e1e1e1; border: 1px solid #adadad; font: 12px/16px "Open Sans", "Noto Sans", sans-serif; color: #000; }
button.focus { border: 2px solid #0078d7; }
button:disabled { background: #ccc; border-color: #bfbfbf; color: #838383; }
.rule { margin-top: 21px; height: 2px; background: #a0a0a0; border-bottom: 1px solid #fff; }
.confirm { display: flex; gap: 10px; margin: 11px 0 0 28px; }
.confirm button { width: 86px; }
.dgrip { position: absolute; right: 2px; bottom: 2px; }
.highlight { position: absolute; left: 29px; top: 66px; width: 286px; height: 36px; border: 5px solid #ed1c24; }
</style>
